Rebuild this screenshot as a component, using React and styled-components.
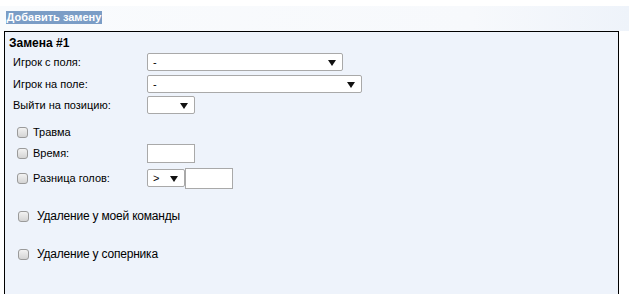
import React from "react";
import styled, { createGlobalStyle } from "styled-components";

const GlobalStyle = createGlobalStyle`
  body {
    margin: 0;
    background: #ffffff;
    font-family: "Liberation Sans", Arial, sans-serif;
    color: #000;
  }
`;

const Page = styled.div`
  width: 629px;
  height: 303px;
  overflow: hidden;
  padding-top: 6px;
  box-sizing: border-box;
`;

const TopBar = styled.div`
  height: 25px;
  box-sizing: border-box;
  padding: 5px 0 0 6px;
  background: linear-gradient(to right, #f9fbfd 0%, #f7f9fc 75%, #eef3fa 100%);
`;

const AddButton = styled.button`
  display: block;
  height: 13px;
  width: 96px;
  padding: 0;
  border: none;
  background: #7b9dc6;
  color: #fff;
  font-family: "Liberation Sans", Arial, sans-serif;
  font-weight: bold;
  font-size: 11px;
  line-height: 13px;
  text-align: center;
  white-space: nowrap;
  overflow: hidden;
`;

const Box = styled.div`
  margin-left: 4px;
  width: 615px;
  height: 263px;
  box-sizing: border-box;
  border: 1px solid #000;
  border-bottom: none;
  background: #eef3fb;
  padding: 4px 0 0 4px;
  font-size: 11px;
`;

const Title = styled.div`
  font-weight: bold;
  font-size: 12px;
  line-height: 14px;
  margin-bottom: 1px;
`;

const Row = styled.div`
  display: flex;
  align-items: center;
  height: ${(p) => p.h || 21}px;
  margin-top: ${(p) => p.mt || 0}px;
  padding-left: ${(p) => p.indent || 4}px;
`;

const Label = styled.span`
  width: ${(p) => p.w || 134}px;
  flex: none;
  font-size: 11px;
`;

const Select = styled.div`
  position: relative;
  width: ${(p) => p.w}px;
  height: 18px;
  box-sizing: border-box;
  border: 1px solid #a9a9a9;
  border-radius: 2px;
  background: #fff;
  font-size: 11px;
  line-height: 16px;
  padding-left: 5px;
  flex: none;

  &::after {
    content: "";
    position: absolute;
    right: 6px;
    top: 6px;
    border-left: 4px solid transparent;
    border-right: 4px solid transparent;
    border-top: 6px solid #111;
  }
`;

const Input = styled.div`
  width: ${(p) => p.w || 48}px;
  height: ${(p) => p.hgt || 19}px;
  box-sizing: border-box;
  border: 1px solid #a9a9a9;
  background: #fff;
  flex: none;
`;

const Check = styled.span`
  width: 11px;
  height: 11px;
  flex: none;
  box-sizing: border-box;
  border: 1px solid #9a9a9a;
  border-radius: 3px;
  background: linear-gradient(#f2f2f2, #d4d4d4);
  margin-right: ${(p) => p.gap || 5}px;
`;

const CheckLabel = styled.span`
  width: ${(p) => (p.w ? p.w + "px" : "auto")};
  flex: none;
  font-size: ${(p) => p.size || 11}px;
  letter-spacing: ${(p) => p.ls || 0}px;
`;

export default function App() {
  return (
    <Page>
      <GlobalStyle />
      <TopBar>
        <AddButton>Добавить замену</AddButton>
      </TopBar>
      <Box>
        <Title>Замена #1</Title>
        <Row h={22}>
          <Label>Игрок с поля:</Label>
          <Select w={196}>-</Select>
        </Row>
        <Row h={21}>
          <Label>Игрок на поле:</Label>
          <Select w={215}>-</Select>
        </Row>
        <Row h={22}>
          <Label>Выйти на позицию:</Label>
          <Select w={48} />
        </Row>
        <Row h={22} mt={5} indent={8}>
          <Check />
          <CheckLabel>Травма</CheckLabel>
        </Row>
        <Row h={20} indent={8}>
          <Check />
          <CheckLabel w={114}>Время:</CheckLabel>
          <Input w={48} hgt={19} />
        </Row>
        <Row h={30} indent={8}>
          <Check />
          <CheckLabel w={114}>Разница голов:</CheckLabel>
          <Select w={38}>&gt;</Select>
          <Input w={48} hgt={21} />
        </Row>
        <Row h={46} indent={9}>
          <Check gap={8} />
          <CheckLabel size={12} ls={-0.2}>Удаление у моей команды</CheckLabel>
        </Row>
        <Row h={30} indent={9}>
          <Check gap={8} />
          <CheckLabel size={12} ls={-0.2}>Удаление у соперника</CheckLabel>
        </Row>
      </Box>
    </Page>
  );
}
